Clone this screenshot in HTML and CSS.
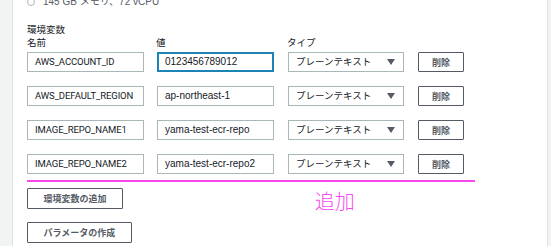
FILE: index.html
```html
<!DOCTYPE html>
<html lang="ja">
<head>
    <meta charset="UTF-8">
    <title>環境変数</title>
    <link rel="stylesheet" href="styles.css">
</head>
<body>
    <div class="side-left"></div>

    <div class="content">
        <!-- Instance option (cut off at the top) -->
        <div class="instance">
            <span class="radio"></span>
            <span>145 GB メモリ、72 vCPU</span>
        </div>

        <div class="section-title">環境変数</div>

        <div class="field-labels">
            <div>名前</div>
            <div>値</div>
            <div>タイプ</div>
        </div>

        <div class="env-row">
            <div class="text-input name">AWS_ACCOUNT_ID</div>
            <div class="text-input focused">0123456789012</div>
            <div class="select">プレーンテキスト<span class="caret"></span></div>
            <button class="btn">削除</button>
        </div>
        <div class="env-row">
            <div class="text-input name">AWS_DEFAULT_REGION</div>
            <div class="text-input">ap-northeast-1</div>
            <div class="select">プレーンテキスト<span class="caret"></span></div>
            <button class="btn">削除</button>
        </div>
        <div class="env-row">
            <div class="text-input name">IMAGE_REPO_NAME1</div>
            <div class="text-input">yama-test-ecr-repo</div>
            <div class="select">プレーンテキスト<span class="caret"></span></div>
            <button class="btn">削除</button>
        </div>
        <div class="env-row">
            <div class="text-input name">IMAGE_REPO_NAME2</div>
            <div class="text-input">yama-test-ecr-repo2</div>
            <div class="select">プレーンテキスト<span class="caret"></span></div>
            <button class="btn">削除</button>
        </div>

        <!-- Annotation -->
        <div class="marker-line"></div>

        <div class="actions">
            <div class="action-buttons">
                <button class="btn btn-wide">環境変数の追加</button>
                <button class="btn btn-wide">パラメータの作成</button>
            </div>
            <div class="marker-note">追加</div>
        </div>
    </div>

    <div class="side-right"></div>
</body>
</html>
```

FILE: styles.css
```css
/* Page */
body {
    margin: 0;
    height: 246px;
    overflow: hidden;
    display: flex;
    background-color: #fff;
    color: #16191f;
    font-family: 'Liberation Sans', 'Noto Sans CJK JP', sans-serif;
    font-size: 10px;
}

.side-left {
    width: 12px;
    flex-shrink: 0;
    background-color: #f2f3f3;
    border-right: 1px solid #dfe3e3;
}

.side-right {
    width: 3px;
    flex-shrink: 0;
    background-color: #f2f3f3;
    border-left: 1px solid #dfe3e3;
}

/* Main column */
.content {
    flex: 1;
    padding-left: 14px;
}

.instance {
    margin-top: -4px;
    height: 12px;
    display: flex;
    align-items: center;
    gap: 8px;
    color: #545b64;
    line-height: 12px;
}

.radio {
    width: 6px;
    height: 6px;
    border: 1px solid #aab7b8;
    border-radius: 50%;
}

.section-title {
    margin-top: 15px;
    line-height: 14px;
    font-size: 9.5px;
}

/* Rows */
.field-labels {
    display: grid;
    grid-template-columns: 129px 131px 130px;
    line-height: 12px;
    font-size: 9.5px;
    margin-bottom: 3px;
}

.env-row {
    display: grid;
    grid-template-columns: 116px 117px 116px 46px;
    column-gap: 14px;
    height: 20px;
    margin-bottom: 14px;
}

.env-row > :first-child {
    margin-right: -1px;
}

.text-input {
    box-sizing: border-box;
    height: 20px;
    border: 1px solid #aab7b8;
    padding: 0 7px;
    line-height: 18px;
    white-space: nowrap;
    overflow: hidden;
}

.text-input.name {
    font-family: Roboto, sans-serif;
    font-size: 9.5px;
    letter-spacing: -0.1px;
}

.text-input.focused {
    border: 2px solid #1c84b4;
    padding: 0 6px;
    line-height: 16px;
}

.select {
    box-sizing: border-box;
    height: 20px;
    border: 1px solid #aab7b8;
    padding: 0 7px;
    line-height: 18px;
    display: flex;
    justify-content: space-between;
    align-items: center;
    font-size: 9.5px;
}

.caret {
    width: 0;
    height: 0;
    border-left: 4px solid transparent;
    border-right: 4px solid transparent;
    border-top: 6px solid #545b64;
    margin-right: 1px;
}

/* Buttons */
.btn {
    box-sizing: border-box;
    height: 20px;
    padding: 0;
    border: 1px solid #545b64;
    border-radius: 1px;
    background-color: #fff;
    color: #545b64;
    font-family: 'Noto Sans CJK JP', sans-serif;
    font-size: 9px;
    font-weight: bold;
}

.btn-wide {
    height: 21px;
    padding: 0 15.5px;
}

/* Annotation */
.marker-line {
    margin-top: -8px;
    width: 448px;
    height: 2px;
    background-color: #f64af0;
}

.actions {
    display: flex;
    align-items: flex-start;
}

.action-buttons {
    display: flex;
    flex-direction: column;
    align-items: flex-start;
    gap: 13px;
    margin-top: 6px;
}

.marker-note {
    margin-left: 183px;
    margin-top: 5px;
    font-family: 'Noto Sans CJK JP', sans-serif;
    font-weight: 300;
    font-size: 20px;
    line-height: 28px;
    color: #f64af0;
}
```
